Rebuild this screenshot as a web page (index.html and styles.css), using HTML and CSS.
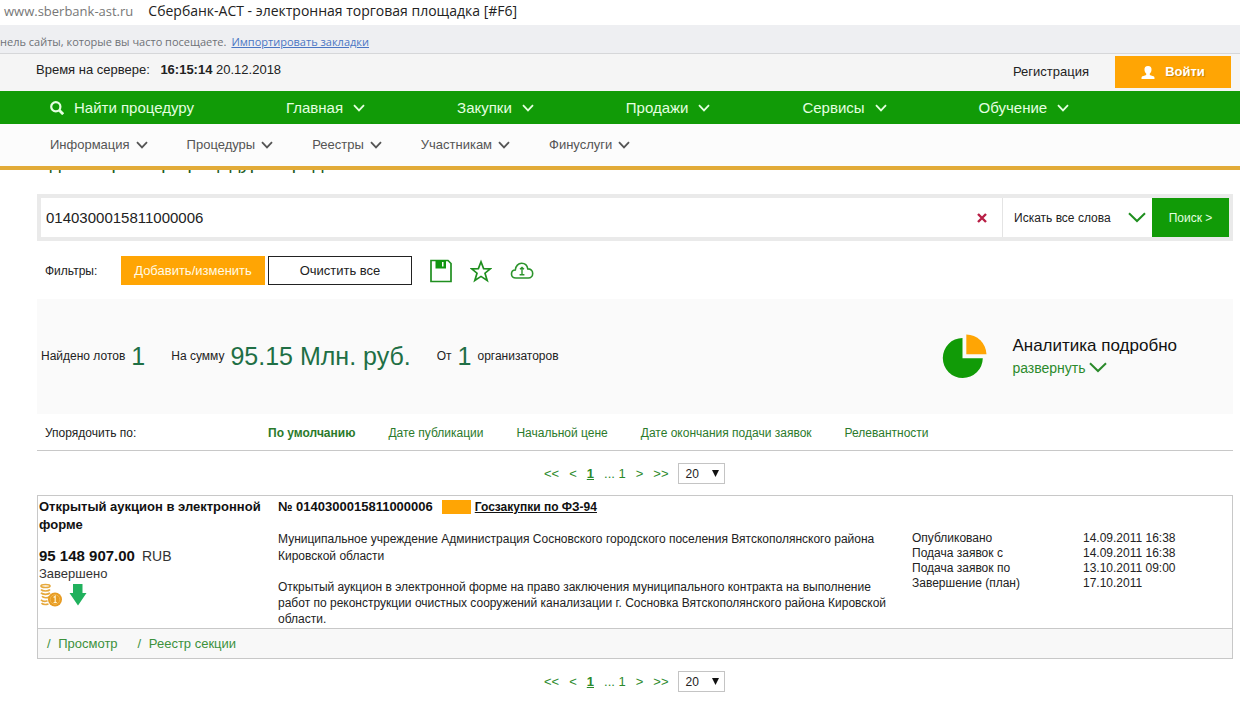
FILE: index.html
```
<!DOCTYPE html>
<html lang="ru">
<head>
<meta charset="utf-8">
<title>Сбербанк-АСТ - электронная торговая площадка</title>
<link rel="stylesheet" href="styles.css">
</head>
<body>
<svg class="defs" width="0" height="0" aria-hidden="true">
  <symbol id="chev" viewBox="0 0 12 8"><path d="M1 1.2 6 6.4 11 1.2" fill="none" stroke="currentColor" stroke-width="1.8"/></symbol>
  <symbol id="chev-wide" viewBox="0 0 18 11"><path d="M1 1.2 9 9 17 1.2" fill="none" stroke="currentColor" stroke-width="2"/></symbol>
</svg>

<div class="address"><span class="address-host">www.sberbank-ast.ru</span><span>Сбербанк-АСТ - электронная торговая площадка [#F6]</span></div>
<div class="bookmarks"><span>нель сайты, которые вы часто посещаете.</span><a href="#">Импортировать закладки</a></div>

<header>
  <div class="topline">
    <div class="clock">Время на сервере: <time><b>16:15:14</b> 20.12.2018</time></div>
    <div class="account">
      <a href="#" class="register">Регистрация</a>
      <button class="login" type="button">
        <svg width="14" height="13" viewBox="0 0 14 13" aria-hidden="true"><path fill="#fff" d="M7 0C4.500 0 3.300 1.700 3.500 3.900 3.600 5.600 4.500 6.800 5.200 7.500V8.900C3.500 9.700 1.300 9.900.8 10.800.5 11.300.5 12.500.5 13h13c0-.5 0-1.700-.3-2.200-.5-.9-2.700-1.100-4.400-1.900V7.500c.7-.7 1.600-1.900 1.700-3.600C10.700 1.700 9.500 0 7 0Z"/></svg>
        Войти
      </button>
    </div>
  </div>
  <nav class="mainnav">
    <a href="#" class="find"><svg width="14" height="14" viewBox="0 0 14 14" aria-hidden="true"><circle cx="5.800" cy="5.800" r="4.600" fill="none" stroke="currentColor" stroke-width="2.200"/><path d="m9 9 4.200 4.200" stroke="currentColor" stroke-width="2.800"/></svg>Найти процедуру</a>
    <a href="#">Главная<svg width="12" height="8"><use href="#chev"/></svg></a>
    <a href="#">Закупки<svg width="12" height="8"><use href="#chev"/></svg></a>
    <a href="#">Продажи<svg width="12" height="8"><use href="#chev"/></svg></a>
    <a href="#">Сервисы<svg width="12" height="8"><use href="#chev"/></svg></a>
    <a href="#">Обучение<svg width="12" height="8"><use href="#chev"/></svg></a>
  </nav>
  <nav class="subnav">
    <a href="#">Информация<svg width="12" height="8"><use href="#chev"/></svg></a>
    <a href="#">Процедуры<svg width="12" height="8"><use href="#chev"/></svg></a>
    <a href="#">Реестры<svg width="12" height="8"><use href="#chev"/></svg></a>
    <a href="#">Участникам<svg width="12" height="8"><use href="#chev"/></svg></a>
    <a href="#">Финуслуги<svg width="12" height="8"><use href="#chev"/></svg></a>
  </nav>
</header>

<main>
  <div class="heading"><h1>Единый реестр процедур и продаж</h1></div>

  <form class="search">
    <input class="query" type="text" value="0140300015811000006" aria-label="Поиск процедуры">
    <button class="clear" type="button" aria-label="Очистить"><svg width="10" height="10" viewBox="0 0 10 10"><path d="M1 1 9 9M9 1 1 9" stroke="#b81f45" stroke-width="2.400"/></svg></button>
    <div class="mode">
      <select aria-label="Режим поиска"><option>Искать все слова</option></select>
      <svg width="18" height="11"><use href="#chev-wide"/></svg>
    </div>
    <button class="go" type="button">Поиск &gt;</button>
  </form>

  <div class="filters">
    <span class="filters-label">Фильтры:</span>
    <button class="btn btn-accent" type="button">Добавить/изменить</button>
    <button class="btn" type="button">Очистить все</button>
    <div class="tools">
      <button type="button" aria-label="Сохранить"><svg width="22" height="24" viewBox="0 0 22 24"><path d="M1 1.500H18L21 4.500V22.500H1Z" fill="none" stroke="#1f8f1f" stroke-width="1.700"/><path d="M5.500 1h10.500v8.500H5.500Z" fill="#119611"/><path d="M12 3h1.500v4.500H12Z" fill="#fff"/></svg></button>
      <button type="button" aria-label="В избранное"><svg width="22" height="24" viewBox="0 0 22 24"><path d="m11 2.800 2.600 6.800 6.600.2-5.200 4.400 2.200 7.300L11 17.400 4.800 21.500 7 14.200 1.800 9.800l6.600-.2Z" fill="none" stroke="#1f8f1f" stroke-width="1.700"/></svg></button>
      <button type="button" aria-label="Выгрузить"><svg width="24" height="24" viewBox="0 0 24 24"><path d="M6 19C3 19 1.500 17.200 1.500 14.900 1.500 12.600 3.200 11 5.300 11 5.600 7 8.400 4.300 11.600 4.300c3.200 0 5.600 2.200 6.200 5.600 2.900 0 4.900 1.900 4.900 4.500S20.800 19 18.300 19Z" fill="none" stroke="#2c942c" stroke-width="1.600"/><path d="M12 8.500v7M10 10.300 12 8.500l2 1.800M9.600 15.700h4.800" fill="none" stroke="#2c942c" stroke-width="1.400"/></svg></button>
    </div>
  </div>

  <section class="stats">
    <div class="totals">
      <div class="total"><span>Найдено лотов</span><strong>1</strong></div>
      <div class="total"><span>На сумму</span><strong>95.15 Млн. руб.</strong></div>
      <div class="total"><span>От</span><strong>1</strong><span>организаторов</span></div>
    </div>
    <div class="analytics">
      <svg width="46" height="46" viewBox="0 0 46 46" aria-hidden="true"><path d="M20.500 5A20 20 0 1 0 40.800 25.300H20.500Z" fill="#119b07"/><path d="M24.300 1.500A20.500 20.500 0 0 1 44.500 21.300H24.300Z" fill="#ffa504"/></svg>
      <div>
        <h2>Аналитика подробно</h2>
        <a href="#" class="expand">развернуть<svg width="18" height="11"><use href="#chev-wide"/></svg></a>
      </div>
    </div>
  </section>

  <div class="sort">
    <span class="sort-label">Упорядочить по:</span>
    <a href="#" class="active">По умолчанию</a>
    <a href="#">Дате публикации</a>
    <a href="#">Начальной цене</a>
    <a href="#">Дате окончания подачи заявок</a>
    <a href="#">Релевантности</a>
  </div>

  <div class="pager">
    <a href="#">&lt;&lt;</a><a href="#">&lt;</a><a href="#" class="current">1</a><span>... <a href="#">1</a></span><a href="#">&gt;</a><a href="#">&gt;&gt;</a>
    <div class="size"><select aria-label="Записей на странице"><option>20</option></select><svg width="7" height="7" viewBox="0 0 7 7"><path d="M0 0H7L3.500 7Z"/></svg></div>
  </div>

  <article class="lot">
    <div class="lot-body">
      <div class="lot-side">
        <h3>Открытый аукцион в электронной форме</h3>
        <div class="price"><b>95 148 907.00</b><span>RUB</span></div>
        <div class="status">Завершено</div>
        <div class="marks">
          <svg width="24" height="24" viewBox="0 0 24 24" aria-hidden="true"><g fill="none" stroke="#e6a93d" stroke-width="1.700"><ellipse cx="6.500" cy="3" rx="4.500" ry="1.500"/><path d="M2 6.500c1.500 2 7.500 2 9 0M2 9.800c1.500 2 7.500 2 9 0M3 13.200c1.500 2 5.500 2 7.500.5M2 16.700c1.500 1.800 4.500 1.800 6.500 1M2.500 20.200c1.500 1.500 4.500 1.500 7 .8"/></g><circle cx="16" cy="16.500" r="7" fill="#e79b22"/><circle cx="16" cy="16.500" r="4.800" fill="none" stroke="#f2b64e"/><path d="m14.600 14.500 1.600-1.200V19.500M14.600 19.500h3.200" fill="none" stroke="#fff3cf" stroke-width="1.200"/></svg>
          <svg width="18" height="24" viewBox="0 0 18 24" aria-hidden="true"><path d="M4 1h9.500v9H17.500L9 22.500.5 10H4Z" fill="#20b15d"/></svg>
        </div>
      </div>
      <div class="lot-main">
        <div class="lot-head"><b>№ 0140300015811000006</b><i class="tag"></i><a href="#">Госзакупки по ФЗ-94</a></div>
        <div class="lot-info">
          <div class="lot-text">
            <p class="customer">Муниципальное учреждение Администрация Сосновского городского поселения Вятскополянского района Кировской области</p>
            <p class="subject">Открытый аукцион в электронной форме на право заключения муниципального контракта на выполнение работ по реконструкции очистных сооружений канализации г. Сосновка Вятскополянского района Кировской области.</p>
          </div>
          <dl class="dates">
            <dt>Опубликовано</dt><dd>14.09.2011 16:38</dd>
            <dt>Подача заявок с</dt><dd>14.09.2011 16:38</dd>
            <dt>Подача заявок по</dt><dd>13.10.2011 09:00</dd>
            <dt>Завершение (план)</dt><dd>17.10.2011</dd>
          </dl>
        </div>
      </div>
    </div>
    <footer class="lot-links"><span>/ <a href="#">Просмотр</a></span><span>/ <a href="#">Реестр секции</a></span></footer>
  </article>

  <div class="pager">
    <a href="#">&lt;&lt;</a><a href="#">&lt;</a><a href="#" class="current">1</a><span>... <a href="#">1</a></span><a href="#">&gt;</a><a href="#">&gt;&gt;</a>
    <div class="size"><select aria-label="Записей на странице"><option>20</option></select><svg width="7" height="7" viewBox="0 0 7 7"><path d="M0 0H7L3.500 7Z"/></svg></div>
  </div>
</main>
</body>
</html>
```
FILE: styles.css
```
* { box-sizing: border-box; }
body { margin: 0; background: #fff; color: #222; font: 12px/16px "Liberation Sans", Arial, sans-serif; }
a { color: inherit; text-decoration: none; }
h1, h2, h3, p, dl, dd { margin: 0; }
button, input, select { font: inherit; color: inherit; margin: 0; padding: 0; border: 0; border-radius: 0; background: none; }
select { appearance: none; }
svg { display: block; flex: none; }
.defs { position: absolute; }

.address { display: flex; gap: 15px; padding: 1px 4px 4px; font: 14px/20px "Open Sans", sans-serif; color: #222; white-space: nowrap; }
.address-host { font-size: 13px; color: #777; }
.bookmarks { display: flex; gap: 5px; padding: 9px 0 3px; border-bottom: 1px solid #d6d7d9; background: #eeeff2; font: 11px/16px "Open Sans", sans-serif; color: #6f7277; white-space: nowrap; }
.bookmarks a { color: #4a76c4; text-decoration: underline; }

.topline { display: flex; justify-content: space-between; padding: 2px 9px 3px 36px; background: #f5f5f5; font-size: 13px; }
.clock { padding-top: 6px; font-size: 13px; }
.clock time { margin-left: 7px; }
.account { display: flex; align-items: center; gap: 26px; }
.login { display: flex; align-items: center; justify-content: center; gap: 10px; width: 116px; height: 32px; background: #ffa504; color: #fff; font-weight: bold; text-shadow: 1px 1px 1px #c98200; }

.mainnav { display: flex; gap: 92px; align-items: center; height: 33px; padding: 0 50px; background: #119b07; color: #e4ffe0; font-size: 15px; }
.mainnav a { display: flex; align-items: center; gap: 10px; white-space: nowrap; }
.subnav { display: flex; gap: 39px; align-items: center; height: 46px; padding: 0 50px; border-bottom: 4px solid #e2ab38; background: #fcfcfc; color: #555; font-size: 13px; }
.subnav a { display: flex; align-items: center; gap: 6px; white-space: nowrap; }

main { padding: 0 7px 0 37px; }
.heading { display: flex; align-items: flex-end; height: 3px; margin-bottom: 21px; overflow: hidden; }
h1 { flex: none; font-size: 19px; line-height: 20px; font-weight: normal; color: #1c5c1c; }

.search { display: flex; height: 47px; border: 4px solid #eaeaea; }
.query { flex: 1; min-width: 0; padding: 0 5px; font-size: 15px; outline: 0; }
.clear { display: grid; place-items: center; width: 40px; }
.mode { display: flex; align-items: center; gap: 4px; padding: 0 6px 0 11px; border-left: 1px solid #e4e4e4; color: #1f8f1f; }
.mode select { width: 110px; color: #222; }
.go { width: 77px; background: #119b07; color: #e4ffe0; }

.filters { display: flex; align-items: center; gap: 3px; padding: 15px 8px 14px; }
.filters-label { width: 73px; }
.btn { width: 144px; height: 29px; border: 1px solid #222; background: #fff; font-size: 13px; }
.btn-accent { border-color: #ffa504; background: #ffa504; color: #fffbe6; }
.tools { display: flex; gap: 18px; margin-left: 15px; }

.stats { display: flex; align-items: center; justify-content: space-between; height: 115px; padding: 0 56px 2px 4px; background: #fafafa; }
.totals { display: flex; gap: 26px; }
.total { display: flex; align-items: center; gap: 6px; white-space: nowrap; }
.total strong { font-size: 25px; line-height: 32px; font-weight: normal; color: #1f6f45; }
.analytics { display: flex; align-items: center; gap: 24px; }
h2 { font-size: 17px; line-height: 24px; font-weight: normal; color: #111; }
.expand { display: flex; align-items: center; gap: 3px; font-size: 14px; line-height: 20px; color: #2b8a2b; }

.sort { display: flex; gap: 33px; padding: 11px 8px 9px; border-bottom: 1px solid #c8c8c8; color: #2b7a2b; white-space: nowrap; }
.sort-label { width: 190px; color: #222; }
.active { font-weight: bold; }

.pager { display: flex; align-items: center; gap: 10px; margin: 12px 0 11px; padding-left: 507px; font-size: 13px; color: #2b8a2b; }
.current { font-weight: bold; text-decoration: underline; }
.size { display: flex; align-items: center; gap: 2px; height: 21px; padding: 0 5px 0 6px; border: 1px solid #c4c4c4; color: #222; fill: #111; }
.size select { width: 25px; font-size: 12px; }

.lot { border: 1px solid #c8c8c8; }
.lot-body { display: flex; padding: 2px 1px 1px; }
.lot-side { width: 239px; flex: none; color: #333; }
h3 { font-size: 13px; line-height: 18px; color: #111; }
.price { display: flex; gap: 7px; margin-top: 13px; font-size: 14px; line-height: 18px; }
.price b { font-size: 15px; color: #111; }
.status { font-size: 13px; line-height: 18px; }
.marks { display: flex; gap: 6px; }
.lot-main { flex: 1; min-width: 0; }
.lot-head { display: flex; align-items: center; gap: 4px; line-height: 18px; color: #111; }
.lot-head b { font-size: 13px; margin-right: 5px; }
.lot-head a { font-weight: bold; text-decoration: underline; }
.tag { width: 29px; height: 14px; background: #ffa504; }
.lot-info { display: flex; gap: 12px; padding-top: 15px; }
.lot-text { width: 622px; flex: none; }
.customer { line-height: 17px; }
.subject { margin-top: 14px; }
.dates { display: grid; grid-template-columns: 171px 1fr; align-content: start; flex: 1; line-height: 15px; }
.lot-links { display: flex; gap: 20px; padding: 5px 9px; border-top: 1px solid #c8c8c8; background: #f8f8f8; font-size: 13px; line-height: 19px; color: #3c913c; }
.lot-links a { margin-left: 4px; }
```
